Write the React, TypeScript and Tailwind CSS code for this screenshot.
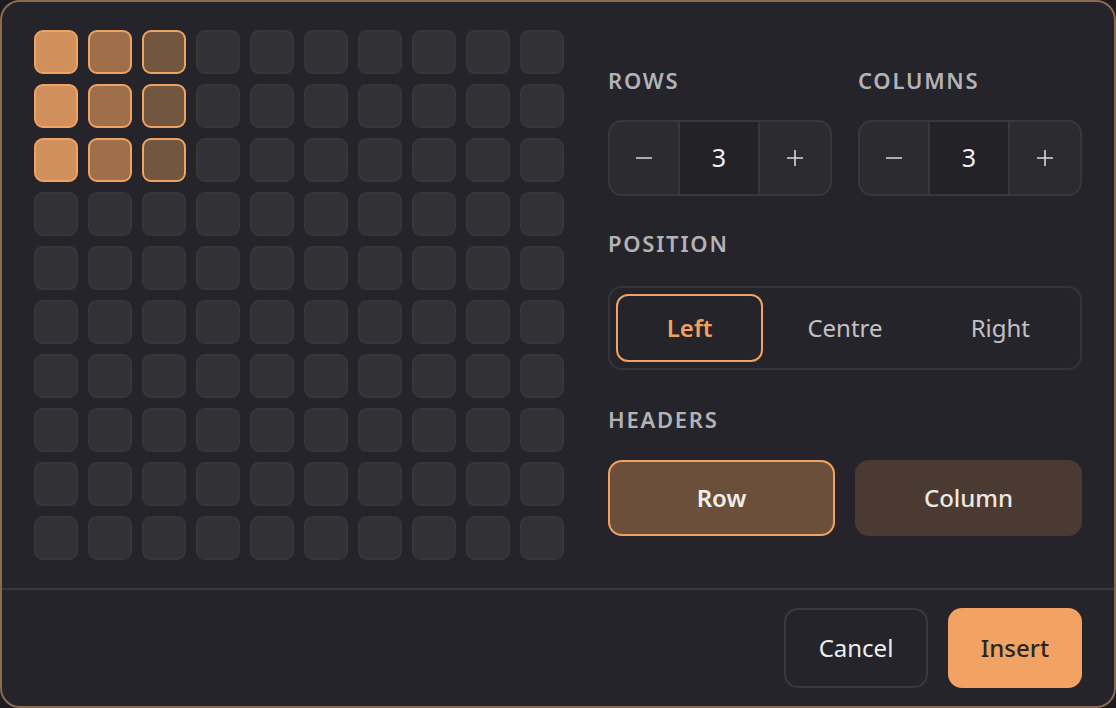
import { useState } from "react";

const SIZE = 10;

function Stepper({ value, onChange }: { value: number; onChange: (v: number) => void }) {
    return (
        <div className="flex h-[76px] flex-1 overflow-hidden rounded-[14px] border-2 border-[#38373c] bg-[#2c2b30]">
            <button
                className="flex w-[68px] items-center justify-center text-[#d8d8da]"
                onClick={() => onChange(Math.max(1, value - 1))}
            >
                <svg width="18" height="18" viewBox="0 0 18 18">
                    <path d="M1 9h16" stroke="currentColor" strokeWidth="1.6" />
                </svg>
            </button>
            <div className="flex flex-1 items-center justify-center border-x-2 border-[#38373c] bg-[#232227] text-[25px] text-[#f0f0f0]">
                {value}
            </div>
            <button
                className="flex w-[70px] items-center justify-center text-[#d8d8da]"
                onClick={() => onChange(Math.min(SIZE, value + 1))}
            >
                <svg width="18" height="18" viewBox="0 0 18 18">
                    <path d="M1 9h16M9 1v16" stroke="currentColor" strokeWidth="1.6" />
                </svg>
            </button>
        </div>
    );
}

function Label({ children, className = "" }: { children: string; className?: string }) {
    return (
        <div className={"h-9 text-[22px] leading-9 font-semibold tracking-[0.08em] text-[#b3b3b7] " + className}>
            {children}
        </div>
    );
}

export default function App() {
    const [rows, setRows] = useState(3);
    const [cols, setCols] = useState(3);
    const [position, setPosition] = useState("Left");
    const [header, setHeader] = useState("Row");

    const fills = ["bg-[#d18f5c]", "bg-[#9e6f4a]", "bg-[#735640]"];

    return (
        <div className="h-[708px] w-[1116px] bg-[#1c1b1f]" style={{ fontFamily: '"Noto Sans", "Open Sans", sans-serif' }}>
            <div className="flex h-full w-full flex-col rounded-[20px] border-2 border-[#8c6a4c] bg-[#25242a]">
                <div className="flex gap-[44px] px-8 pt-7 pb-7">
                    <div className="grid grid-cols-10 gap-[10px]">
                        {Array.from({ length: SIZE * SIZE }).map((_, i) => {
                            const r = Math.floor(i / SIZE);
                            const c = i % SIZE;
                            const on = r < rows && c < cols;
                            const fill = on ? fills[Math.min(c, 2)] : "";
                            return (
                                <div
                                    key={i}
                                    className={
                                        on
                                            ? "h-11 w-11 rounded-[9px] border-2 border-[#f0a261] " + fill
                                            : "h-11 w-11 rounded-[9px] border-2 border-[#37363b] bg-[#323136]"
                                    }
                                />
                            );
                        })}
                    </div>

                    <div className="flex flex-1 flex-col pt-[32px]">
                        <div className="flex gap-[26px]">
                            <div className="flex flex-1 flex-col">
                                <Label>ROWS</Label>
                                <div className="mt-[22px] flex">
                                    <Stepper value={rows} onChange={setRows} />
                                </div>
                            </div>
                            <div className="flex flex-1 flex-col">
                                <Label>COLUMNS</Label>
                                <div className="mt-[22px] flex">
                                    <Stepper value={cols} onChange={setCols} />
                                </div>
                            </div>
                        </div>

                        <Label className="mt-[29px]">POSITION</Label>
                        <div className="mt-[25px] flex h-[84px] gap-2 rounded-[14px] border-2 border-[#353439] p-[6px]">
                            {["Left", "Centre", "Right"].map((p) => (
                                <button
                                    key={p}
                                    onClick={() => setPosition(p)}
                                    className={
                                        position === p
                                            ? "flex-1 rounded-[12px] border-2 border-[#f0a261] text-[24px] font-semibold text-[#f0a261]"
                                            : "flex-1 rounded-[12px] border-2 border-transparent text-[24px] text-[#c2c2c5]"
                                    }
                                >
                                    {p}
                                </button>
                            ))}
                        </div>

                        <Label className="mt-[31px]">HEADERS</Label>
                        <div className="mt-[23px] flex gap-5">
                            {["Row", "Column"].map((h) => (
                                <button
                                    key={h}
                                    onClick={() => setHeader(h)}
                                    className={
                                        header === h
                                            ? "h-[76px] flex-1 rounded-[14px] border-2 border-[#f0a261] bg-[#6b4f3b] text-[24px] font-semibold text-[#f3f0ec]"
                                            : "h-[76px] flex-1 rounded-[14px] border-2 border-transparent bg-[#4a3a31] text-[24px] font-medium text-[#ece8e4]"
                                    }
                                >
                                    {h}
                                </button>
                            ))}
                        </div>
                    </div>
                </div>

                <div className="flex justify-end gap-5 border-t-2 border-[#38373c] px-8 pt-[18px]">
                    <button className="h-[80px] w-[144px] rounded-[14px] border-2 border-[#3a393e] text-[24px] text-[#eeeeee]">
                        Cancel
                    </button>
                    <button className="h-[80px] w-[134px] rounded-[14px] bg-[#f2a262] text-[24px] font-medium text-[#2a2622]">
                        Insert
                    </button>
                </div>
            </div>
        </div>
    );
}
